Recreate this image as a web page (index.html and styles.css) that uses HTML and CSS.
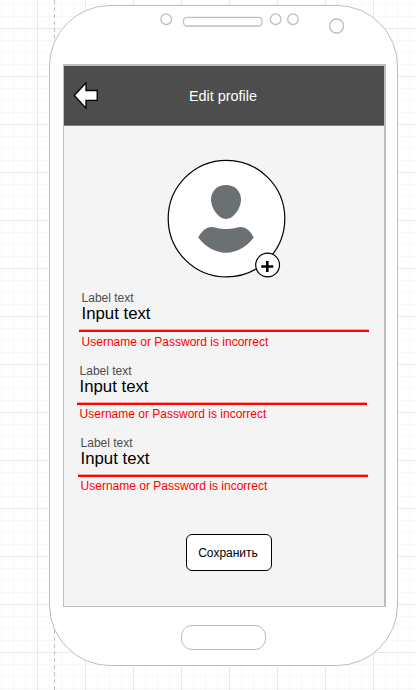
FILE: index.html
```html
<!DOCTYPE html>
<html lang="ru">
<head>
<meta charset="utf-8">
<title>Edit profile</title>
<link rel="stylesheet" href="styles.css">
</head>
<body>
<main class="canvas">
  <section class="phone">
    <svg class="sensors" width="347" height="58" viewBox="50 6 347 58">
      <circle cx="166.2" cy="19.2" r="5.3"/>
      <rect x="183.5" y="17.3" width="78.5" height="8.7" rx="3.5"/>
      <circle cx="275.7" cy="19.2" r="5.3"/>
      <circle cx="293" cy="19.2" r="5.3"/>
      <circle cx="336.6" cy="26" r="7"/>
    </svg>
    <div class="screen">
      <header class="header">
        <svg class="back" width="26" height="28" viewBox="73 82 26 28">
          <path d="M74.3 95.5 86 82.7V90.5H97.2V100.4H86V108.2Z"/>
        </svg>
        <h1 class="title">Edit profile</h1>
      </header>
      <div class="avatar">
        <svg width="120" height="120" viewBox="167 159 120 120">
          <circle class="ring" cx="226.5" cy="218.6" r="58.3"/>
          <path class="person" d="M226 185C234.5 185 241 191 241 199.5C241 208 233.5 219 226 219C218.5 219 211 208 211 199.5C211 191 217.5 185 226 185Z"/>
          <path class="person" d="M198.3 237.5C201 231.5 206.5 226.6 212 226.9C216 227.2 219 229 226 229C233 229 236 227.2 240 226.9C246 226.6 251 231.5 253.7 237.5C247 246.5 237 252.7 226 252.7C215 252.7 205 246.5 198.3 237.5Z"/>
          <circle class="ring" cx="267.6" cy="265" r="11.9"/>
          <path class="plus" d="M261.3 266.5H273.3M267.3 261V272"/>
        </svg>
      </div>
      <form class="form">
        <div class="field">
          <div class="label">Label text</div>
          <div class="input">Input text</div>
          <div class="error">Username or Password is incorrect</div>
        </div>
        <div class="field field-second">
          <div class="label">Label text</div>
          <div class="input">Input text</div>
          <div class="error">Username or Password is incorrect</div>
        </div>
        <div class="field field-third">
          <div class="label">Label text</div>
          <div class="input">Input text</div>
          <div class="error">Username or Password is incorrect</div>
        </div>
      </form>
      <button class="save" type="button">Сохранить</button>
    </div>
    <div class="home"></div>
  </section>
</main>
</body>
</html>
```
FILE: styles.css
```css
* {
  box-sizing: border-box;
}

body {
  margin: 0;
  font-family: "Liberation Sans", Arial, sans-serif;
}

.canvas {
  width: 416px;
  height: 690px;
  padding: 5px 0 0 49px;
  overflow: hidden;
  background-color: #fff;
  background-image:
    repeating-linear-gradient(to bottom, #bebebe 0 4px, transparent 4px 7px),
    linear-gradient(to right, #e9e9e9 1px, transparent 1px),
    linear-gradient(to bottom, #e9e9e9 1px, transparent 1px),
    linear-gradient(to right, #f8f8f8 1px, transparent 1px),
    linear-gradient(to bottom, #f8f8f8 1px, transparent 1px);
  background-size: 1px 100%, 48px 48px, 48px 48px, 12px 12px, 12px 12px;
  background-position: 54px 0, 37px 28px, 37px 28px, 1px 4px, 1px 4px;
  background-repeat: no-repeat, repeat, repeat, repeat, repeat;
}

.phone {
  width: 349px;
  height: 661px;
  display: flex;
  flex-direction: column;
  border: 1px solid #bebebe;
  border-radius: 61px;
  background: #fff;
}

.sensors {
  display: block;
  flex: none;
  fill: #fff;
  stroke: #bebebe;
  stroke-width: 1.3;
}

.screen {
  width: 323px;
  height: 543px;
  margin-left: 13px;
  flex: none;
  display: flex;
  flex-direction: column;
  border: 1px solid #bebebe;
  border-top-width: 2px;
  border-right-width: 2px;
  background: #f4f4f4;
}

.header {
  height: 60px;
  flex: none;
  display: flex;
  align-items: center;
  border-bottom: 1px solid #808080;
  background: #4d4d4d;
}

.back {
  margin-left: 9px;
  fill: #fff;
  stroke: #000;
  stroke-width: 1.3;
}

.title {
  margin: 0 0 0 90px;
  font-size: 14.4px;
  font-weight: 400;
  line-height: 18px;
  color: #fff;
}

.avatar {
  height: 120px;
  margin: 33px 0 0 103px;
}

.avatar svg {
  display: block;
}

.ring {
  fill: #fff;
  stroke: #000;
  stroke-width: 1.2;
}

.person {
  fill: #6b7073;
}

.plus {
  fill: none;
  stroke: #000;
  stroke-width: 2.6;
}

.form {
  margin: 12px 0 0 15px;
}

.field {
  width: 290px;
  white-space: nowrap;
}

.field-second {
  margin: 15px 0 0 -2px;
}

.field-third {
  margin: 15px 0 0 -1px;
}

.label {
  padding-left: 2.6px;
  font-size: 12px;
  line-height: 14px;
  color: #4d4d4d;
}

.input {
  height: 27px;
  padding-left: 2.5px;
  border-bottom: 2px solid #f00;
  box-shadow: inset 0 -1px 0 #ff9c9c;
  font-size: 16.8px;
  line-height: 17px;
  color: #000;
}

.error {
  padding: 3px 0 0 2.6px;
  font-size: 12px;
  line-height: 14px;
  color: #f00;
}

.field-second .error,
.field-third .error {
  padding-top: 2px;
}

.save {
  width: 86px;
  height: 37px;
  margin: 41px 0 0 122px;
  padding: 0 2px 0 0;
  border: 1.2px solid #000;
  border-radius: 6px;
  background: #fff;
  font: 12px/14px "Liberation Sans", Arial, sans-serif;
  color: #000;
}

.home {
  width: 85px;
  height: 25px;
  margin: 18px 0 0 131px;
  flex: none;
  border: 1.2px solid #bebebe;
  border-radius: 11px;
}
```
